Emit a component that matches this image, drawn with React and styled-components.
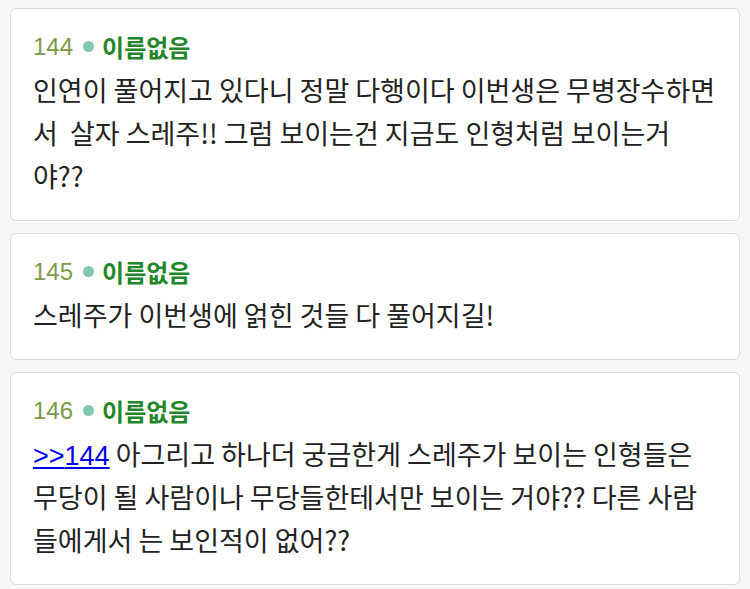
import React from 'react'
import styled, {createGlobalStyle} from 'styled-components'

const GlobalStyle = createGlobalStyle`
    html, body {
        margin: 0;
        padding: 0;
        background: #f7f7f7;
    }
    body {
        font-family: "Noto Sans CJK KR", "Noto Sans", sans-serif;
        color: #222;
    }
`

const Thread = styled.div`
    display: flex;
    flex-direction: column;
    gap: 12px;
    padding: 8px 10px;
`

const Post = styled.article`
    background: #fff;
    border: 1px solid #dcdcdc;
    border-radius: 6px;
    padding: 16px 22px 23px;
`

const Header = styled.div`
    display: flex;
    align-items: center;
    font-size: 24px;
    line-height: 43px;
`

const Num = styled.span`
    font-family: "Liberation Sans", Arial, sans-serif;
    color: #7b9a48;
    margin-right: 10px;
`

const Dot = styled.span`
    width: 11px;
    height: 11px;
    border-radius: 50%;
    background: #80c9b0;
    margin-right: 8px;
`

const Name = styled.span`
    color: #23862a;
    font-weight: 700;
`

const Body = styled.p`
    margin: 0;
    font-size: 27px;
    line-height: 43px;
    white-space: pre-wrap;
    word-break: break-all;
`

const Anchor = styled.a`
    font-family: "Liberation Sans", Arial, sans-serif;
    line-height: 1;
    color: #0000ee;
    text-decoration: underline;
`

const posts = [
    {num: 144, text: '인연이 풀어지고 있다니 정말 다행이다 이번생은 무병장수하면서  살자 스레주!! 그럼 보이는건 지금도 인형처럼 보이는거야??'},
    {num: 145, text: '스레주가 이번생에 얽힌 것들 다 풀어지길!'},
    {num: 146, ref: 144, text: ' 아그리고 하나더 궁금한게 스레주가 보이는 인형들은 무당이 될 사람이나 무당들한테서만 보이는 거야?? 다른 사람들에게서 는 보인적이 없어??'},
]

function App() {
    return (
        <>
            <GlobalStyle />
            <Thread>
                {posts.map(p => (
                    <Post key={p.num}>
                        <Header>
                            <Num>{p.num}</Num>
                            <Dot />
                            <Name>이름없음</Name>
                        </Header>
                        <Body>
                            {p.ref && <Anchor href="#">&gt;&gt;{p.ref}</Anchor>}
                            {p.text}
                        </Body>
                    </Post>
                ))}
            </Thread>
        </>
    )
}

export default App
